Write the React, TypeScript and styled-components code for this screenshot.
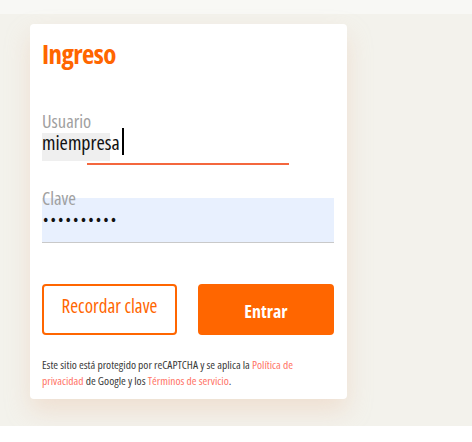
import React from "react";
import styled, { createGlobalStyle } from "styled-components";

const Global = createGlobalStyle`
  html, body { margin: 0; padding: 0; background: #ffffff; }
  body {
    font-family: "Open Sans", "Roboto", sans-serif;
    font-stretch: 75%;
  }
  * { box-sizing: border-box; }
`;

const Page = styled.div`
  height: 426px;
  padding: 24px 0 0 30px;
  background: linear-gradient(to bottom, #f8f8f5 0, #f8f8f5 14px, #f3f2ec 14px);
`;

const Card = styled.form`
  width: 317px;
  height: 375px;
  background: #ffffff;
  border-radius: 4px;
  padding: 14px 13px 0 12px;
  box-shadow: 0 12px 24px rgba(232, 190, 160, 0.35);
  display: flex;
  flex-direction: column;
`;

const Title = styled.h1`
  margin: 0;
  color: #ff6600;
  font-size: 27px;
  line-height: 32px;
  font-weight: 700;
  letter-spacing: -0.6px;
`;

const Field = styled.div<{ $top: number }>`
  position: relative;
  margin-top: ${(p) => p.$top}px;
  height: 45px;
`;

const Label = styled.label`
  position: absolute;
  left: 0;
  top: -10px;
  font-size: 18.5px;
  line-height: 20px;
  color: #a0a0a0;
  pointer-events: none;
`;

const Input = styled.input<{ $filled?: boolean }>`
  display: block;
  width: 100%;
  height: 45px;
  border: none;
  border-bottom: 1px solid ${(p) => (p.$filled ? "#c9c9c9" : "transparent")};
  outline: none;
  padding: 0 0 2px 0;
  font-family: inherit;
  font-stretch: inherit;
  font-size: 20px;
  color: #111;
  background: ${(p) =>
    p.$filled
      ? "#e8f0fe"
      : "linear-gradient(#efefef, #efefef) no-repeat 0 12px / 68px 28px transparent"};
`;

const Dots = styled(Input)`
  font-family: "DejaVu Sans", sans-serif;
  font-size: 14px;
  letter-spacing: 0.1px;
  padding: 0;
`;

const Caret = styled.span`
  position: absolute;
  left: 80px;
  top: 7px;
  width: 1.5px;
  height: 27px;
  background: #000;
`;

const Focus = styled.div`
  width: 202px;
  height: 2px;
  margin: -3px auto 0;
  background: #f4673e;
`;

const Buttons = styled.div`
  display: grid;
  grid-template-columns: 135px 136px;
  column-gap: 21px;
  margin-top: 41px;
`;

const Button = styled.button<{ $primary?: boolean }>`
  height: 51px;
  border-radius: 4px;
  font-family: inherit;
  font-stretch: inherit;
  font-size: ${(p) => (p.$primary ? 18 : 19)}px;
  cursor: pointer;
  border: 2px solid #ff6600;
  background: ${(p) => (p.$primary ? "#ff6600" : "#ffffff")};
  color: ${(p) => (p.$primary ? "#ffffff" : "#ff6600")};
  font-weight: ${(p) => (p.$primary ? 700 : 400)};
  padding: ${(p) => (p.$primary ? "2px 0 0" : "0 0 8px")};
`;

const Legal = styled.p`
  margin: 22px 0 0;
  font-size: 11.5px;
  line-height: 16px;
  color: #3a3a3a;
`;

const Link = styled.a`
  color: #ff7466;
  text-decoration: none;
`;

export default function App() {
  return (
    <>
      <Global />
      <Page>
        <Card onSubmit={(e) => e.preventDefault()}>
          <Title>Ingreso</Title>
          <Field $top={51}>
            <Label>Usuario</Label>
            <Input readOnly value="miempresa" />
            <Caret />
          </Field>
          <Focus />
          <Field $top={33}>
            <Label>Clave</Label>
            <Dots $filled type="password" readOnly value="miempresa1" />
          </Field>
          <Buttons>
            <Button type="button">Recordar clave</Button>
            <Button type="submit" $primary>Entrar</Button>
          </Buttons>
          <Legal>
            Este sitio está protegido por reCAPTCHA y se aplica la <Link href="#">Política de privacidad</Link> de Google y los <Link href="#">Términos de servicio</Link>.
          </Legal>
        </Card>
      </Page>
    </>
  );
}
